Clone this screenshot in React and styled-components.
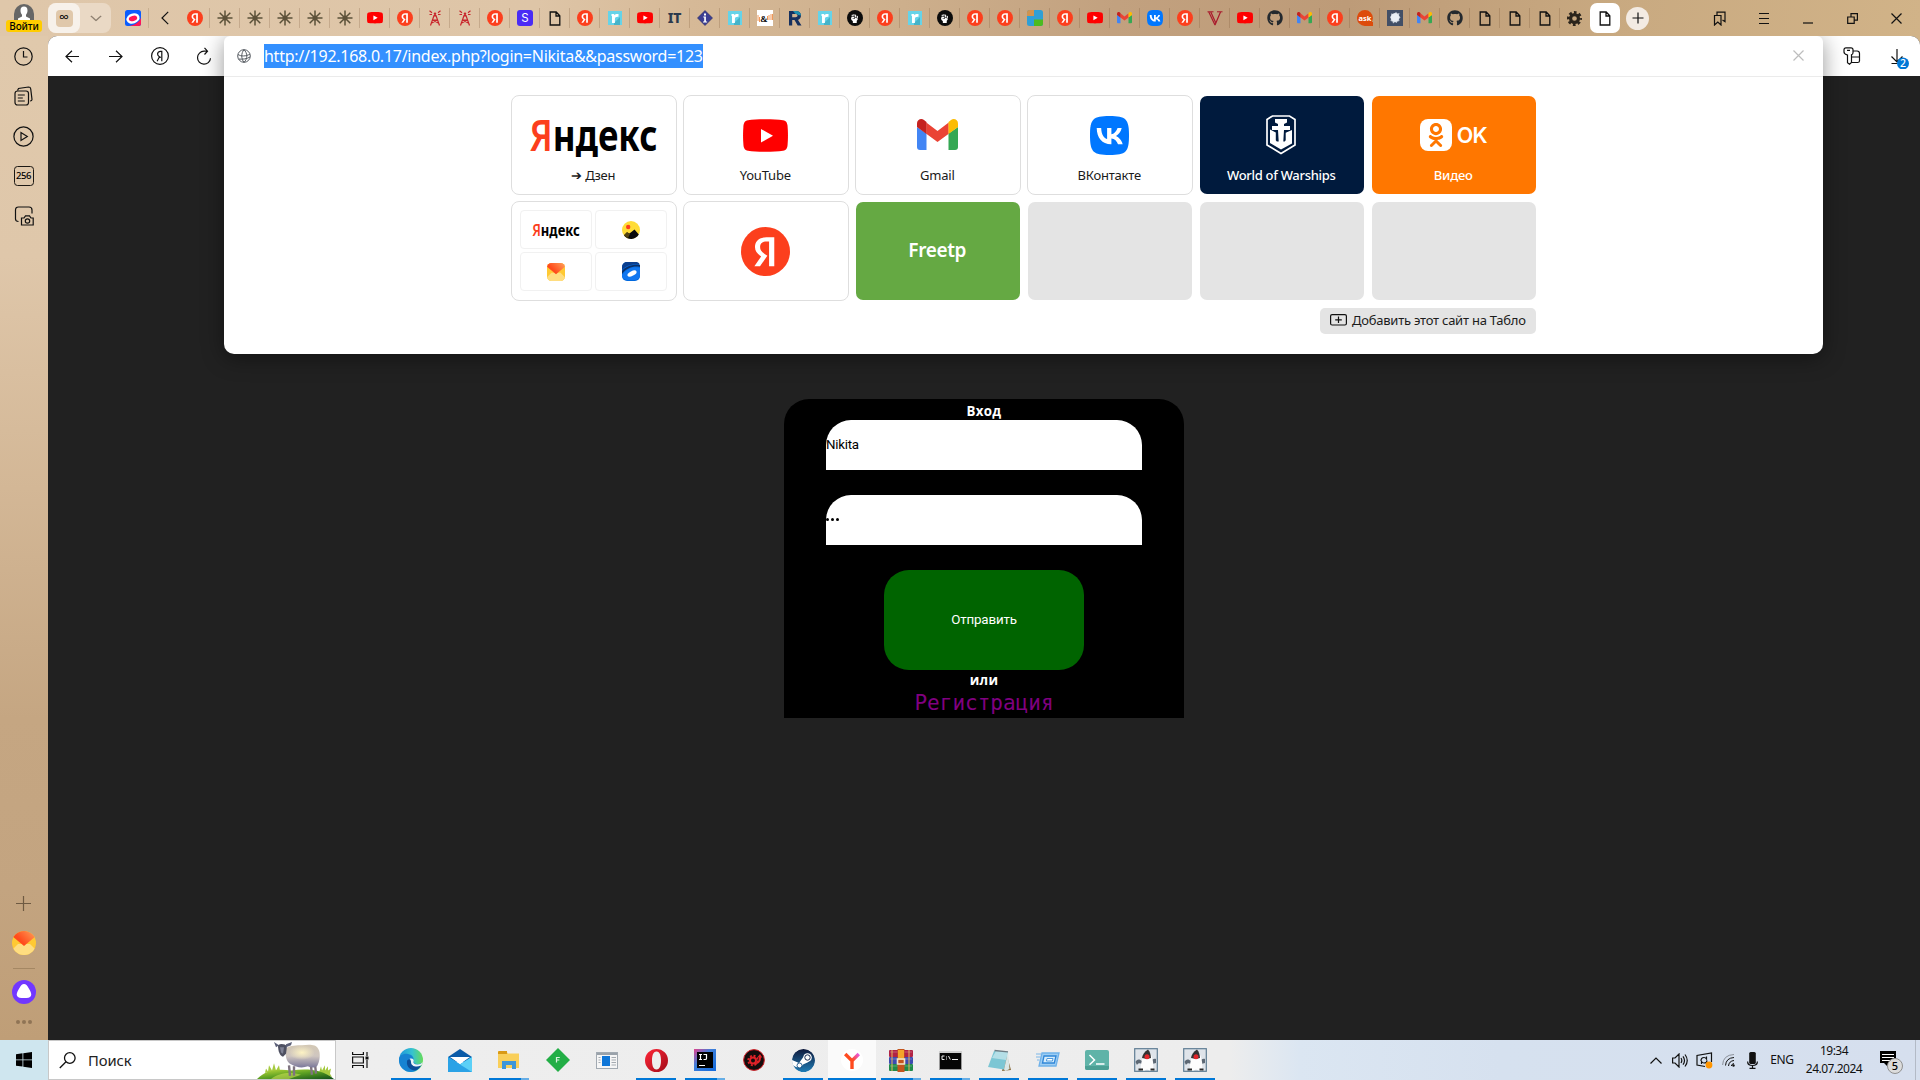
import React from "react";
import styled, { createGlobalStyle } from "styled-components";
import { FaGithub, FaOdnoklassniki, FaHandFist } from "react-icons/fa6";

const Global = createGlobalStyle`
  * { box-sizing: border-box; }
  html, body { margin: 0; padding: 0; overflow: hidden; }
  body { font-family: "Noto Sans", "Open Sans", sans-serif; color: #000; }
  svg { display: block; flex: none; }
`;

const UI = `"Noto Sans", "Open Sans", sans-serif`;

const Screen = styled.div`
  width: 1920px;
  height: 1080px;
  display: grid;
  grid-template-columns: 48px 1fr;
  grid-template-rows: 36px 1fr 40px;
  overflow: hidden;
  background: linear-gradient(90deg, #dfc7aa 0 200px, #d1b388 1700px);
`;

/* ---------- tab strip ---------- */
const TopBar = styled.header`
  grid-column: 1 / 3;
  display: flex;
  align-items: center;
  background: linear-gradient(97deg, #dfc7aa 0%, #dec5a7 28%, #d6b997 36%, #cdaf8c 47%, #c2a17f 58%, #bd9b78 70%, #c9aa81 85%, #d1b388 100%);
`;
const Account = styled.div`
  width: 48px;
  height: 36px;
  display: flex;
  flex-direction: column;
  align-items: center;
  padding-top: 4px;
`;
const SignIn = styled.div`
  width: 36px;
  height: 12px;
  flex: none;
  border-radius: 3px;
  background: #ffcc00;
  font: 500 10px/12px ${UI};
  letter-spacing: -0.1px;
  text-align: center;
`;
const TabGroup = styled.div`
  width: 63px;
  height: 30px;
  border-radius: 8px;
  display: flex;
  background: #ead9c5;
`;
const GroupCell = styled.div`
  width: ${p => p.$w}px;
  height: 30px;
  border-radius: 8px;
  display: flex;
  align-items: center;
  justify-content: center;
  background: ${p => (p.$on ? "#f7f1ea" : "transparent")};
`;
const GroupBadge = styled.div`
  width: 17px;
  height: 17px;
  border-radius: 4px;
  background: #e0c8ab;
  font: 500 14px/14px ${UI};
  text-align: center;
`;
const Pinned = styled.div`
  width: 38px;
  height: 20px;
  padding-left: 14px;
  display: flex;
  align-items: center;
  border-right: 1px solid #c9b091;
`;
const Back = styled.div`
  width: 31px;
  display: flex;
  justify-content: center;
`;
const Tab = styled.div`
  width: 30px;
  height: ${p => (p.$active ? 30 : 20)}px;
  flex: none;
  display: flex;
  align-items: center;
  justify-content: center;
  border-right: ${p => (p.$line ? "1px solid rgba(110,75,40,.22)" : "1px solid transparent")};
  ${p => p.$active && "background:#fff;border-radius:7px;border:0;"}
`;
const NewTab = styled.div`
  width: 23px;
  height: 23px;
  margin-left: 6px;
  border-radius: 50%;
  background: #f3ebe3;
  display: flex;
  align-items: center;
  justify-content: center;
`;
const WindowControls = styled.div`
  margin-left: auto;
  margin-right: 2px;
  display: flex;
  & > div { width: 44px; display: flex; justify-content: center; align-items: center; }
`;

/* ---------- side bar ---------- */
const Side = styled.aside`
  display: flex;
  flex-direction: column;
  align-items: center;
  background: linear-gradient(180deg, #e0c9ac 0%, #dfc7aa 22%, #d3b796 45%, #c5a682 68%, #c3a480 85%, #bf9e77 100%);
`;
const SideItem = styled.div`
  height: ${p => p.$h || 40}px;
  padding-bottom: ${p => p.$pb || 0}px;
  padding-right: 1px;
  display: flex;
  align-items: center;
  justify-content: center;
`;
const SideSpacer = styled.div` flex: 1; `;
const SideLine = styled.div` width: 22px; height: 1px; background: #a48763; `;
const Count = styled.div`
  width: 20px;
  height: 20px;
  border: 1.2px solid #1c1813;
  border-radius: 3.5px;
  font: 500 9.5px/18px ${UI};
  letter-spacing: -0.5px;
  text-align: center;
`;

/* ---------- browser body ---------- */
const Main = styled.main`
  position: relative;
  overflow: hidden;
  display: flex;
  flex-direction: column;
  border-radius: 9px 9px 0 0;
  background: #212121;
`;
const Toolbar = styled.div`
  height: 40px;
  flex: none;
  display: flex;
  align-items: center;
  background: #fff;
  padding: 0 2px;
  & > div { width: 44px; display: flex; justify-content: center; }
  & > div.grow { flex: 1; }
`;
const Page = styled.div`
  flex: 1;
  display: flex;
  justify-content: center;
  align-items: flex-start;
  padding-top: 323px;
`;

/* ---------- omnibox panel ---------- */
const Panel = styled.section`
  position: absolute;
  left: 176px;
  top: 0;
  width: 1599px;
  height: 318px;
  border-radius: 6px 6px 10px 10px;
  background: #fff;
  box-shadow: 0 4px 22px rgba(0,0,0,.42);
  display: flex;
  flex-direction: column;
`;
const Address = styled.div`
  height: 41px;
  flex: none;
  display: flex;
  align-items: center;
  padding: 0 19px 1px 13px;
  border-bottom: 1px solid #ebebeb;
`;
const Url = styled.div`
  width: 439px;
  height: 24px;
  margin-left: 13px;
  margin-right: auto;
  background: #3390ff;
  color: #fff;
  font: 400 16px/24px ${UI};
  letter-spacing: -0.265px;
  white-space: nowrap;
`;
const Board = styled.div`
  display: flex;
  flex-direction: column;
  padding: 18px 286px 0 287px;
`;
const Tiles = styled.div`
  display: grid;
  grid-template-columns: repeat(6, 166px);
  grid-auto-rows: 100px;
  gap: 6px;
`;
const Tile = styled.div`
  border: 1px solid ${p => (p.$bg ? "transparent" : "#dedede")};
  border-radius: 8px;
  padding-right: 1.5px;
  background: ${p => p.$bg || "#fff"};
  background-clip: padding-box;
  color: ${p => (p.$bg ? "#fff" : "#1a1a1a")};
  display: flex;
  flex-direction: column;
  align-items: center;
`;
const TileLogo = styled.div`
  height: 78px;
  flex: none;
  display: flex;
  align-items: center;
  justify-content: center;
`;
const TileLabel = styled.div`
  margin-top: -8px;
  font: ${p => (p.$bold ? 500 : 400)} 13px/18px ${UI};
  letter-spacing: ${p => p.$ls || "-0.2px"};
  white-space: nowrap;
`;
const OkWord = styled.span`
  margin-left: 5px;
  font: 600 21.5px/32px "Inter", sans-serif;
  letter-spacing: -0.9px;
`;
const Freetp = styled.div`
  margin: auto;
  padding-bottom: 3px;
  font: 600 19px/26px ${UI};
  letter-spacing: -0.35px;
`;
const MiniGrid = styled.div`
  display: grid;
  grid-template-columns: 72px 72px;
  grid-auto-rows: 39px;
  gap: 3px;
  margin-top: 8px;
`;
const Mini = styled.div`
  border: 1px solid #f1f1f1;
  border-radius: 4px;
  display: flex;
  align-items: center;
  justify-content: center;
`;
const Center = styled.div` margin: auto; `;
const AddSite = styled.div`
  align-self: flex-end;
  width: 216px;
  height: 26px;
  margin-top: 7px;
  margin-right: 1px;
  padding: 0 0 2px 10px;
  border-radius: 5px;
  background: #e4e4e4;
  color: #1c1c1c;
  display: flex;
  align-items: center;
  gap: 5px;
  font: 400 13px/24px ${UI};
  letter-spacing: -0.24px;
  white-space: nowrap;
`;

/* ---------- login form ---------- */
const Form = styled.form`
  width: 400px;
  height: 319px;
  border-radius: 25px 25px 0 0;
  background: #000;
  display: flex;
  flex-direction: column;
  align-items: center;
`;
const FormTitle = styled.div`
  height: ${p => p.$h}px;
  padding-top: ${p => p.$pt}px;
  color: #fff;
  font: 700 13.3px/18px "Open Sans", ${UI};
  letter-spacing: 0.3px;
`;
const Field = styled.div`
  width: 316px;
  height: 50px;
  margin-bottom: 25px;
  border-radius: 25px 25px 0 0;
  background: #fff;
  font: 400 13.33px/50px Roboto, "Liberation Sans", sans-serif;
  letter-spacing: -0.25px;
`;
const Dots = styled.div`
  display: flex;
  gap: 2px;
  padding-top: 23px;
  & > i { width: 3px; height: 3px; border-radius: 50%; background: #000; }
`;
const Submit = styled.div`
  width: 200px;
  height: 100px;
  border-radius: 25px;
  background: #006400;
  color: #fff;
  text-align: center;
  font: 400 13.33px/100px Roboto, "Liberation Sans", sans-serif;
  letter-spacing: -0.15px;
`;
const Register = styled.div`
  color: #800080;
  font: 400 21px/27px "DejaVu Sans Mono", monospace;
`;

/* ---------- task bar ---------- */
const TaskBar = styled.footer`
  grid-column: 1 / 3;
  display: flex;
  background: linear-gradient(90deg, #cfe6ef 0, #cfe6ef 48px, #eee 336px, #ededed 1230px, #dbe6f2 1300px, #d6e1ef 1500px, #d6dfee 1920px);
`;
const Start = styled.div`
  width: 48px;
  display: flex;
  align-items: center;
  justify-content: center;
`;
const Search = styled.div`
  width: 288px;
  border: 1px solid #c8c8c8;
  background: #fff;
  display: flex;
  align-items: center;
  padding-left: 10px;
  overflow: hidden;
`;
const SearchText = styled.div`
  flex: 1;
  margin-left: 12px;
  color: #222;
  font: 400 14.8px/20px ${UI};
  letter-spacing: -0.1px;
`;
const TaskButton = styled.div`
  width: ${p => (p.$active ? 48 : 40)}px;
  margin-right: ${p => (p.$active ? 5 : 9)}px;
  margin-left: ${p => (p.$active ? -4 : 0)}px;
  height: 40px;
  display: flex;
  flex-direction: column;
  align-items: center;
  background: ${p => (p.$active ? "#fafafa" : "transparent")};
`;
const TaskIcon = styled.div`
  height: 38px;
  padding-top: 2px;
  display: flex;
  align-items: center;
`;
const Under = styled.div`
  width: 100%;
  height: 2px;
  background: ${p =>
    p.$kind === "multi"
      ? "linear-gradient(90deg,#0078d7 0 32px,#66aee6 32px)"
      : p.$kind
      ? "#0078d7"
      : "transparent"};
`;
const Apps = styled.div` display: flex; padding-left: ${p => p.$pad}px; `;
const Tray = styled.div`
  margin-left: auto;
  display: flex;
  align-items: center;
  color: #111;
  font: 400 12px/18px ${UI};
`;
const TrayCell = styled.div`
  width: ${p => p.$w}px;
  display: flex;
  justify-content: center;
  letter-spacing: -0.3px;
  white-space: nowrap;
`;
const Clock = styled.div`
  width: 66px;
  text-align: center;
  letter-spacing: -0.5px;
`;
const Notice = styled.div`
  width: 48px;
  padding: 1px 2px 0 0;
  display: flex;
  justify-content: center;
`;
const Peek = styled.div`
  width: 5px;
  height: 40px;
  border-left: 1px solid #b3bac6;
`;

/* ---------- drawings ---------- */
const line = { fill: "none", stroke: "#111", strokeWidth: 1.2 };

const Ya = ({ s = 16 }) => (
  <svg width={s} height={s} viewBox="0 0 48 48">
    <circle cx="24" cy="24" r="24" fill="#fc3f1d" />
    <path d="M27.5 38.500V14.200h-2.600c-4 0-6.200 2-6.200 5.200 0 3.400 1.500 5 4.500 7l2.600 1.700-7.200 10.400h-5.500l6.600-9.700c-3.800-2.700-6-5.300-6-9.200 0-5.600 3.900-9.500 11.200-9.500h7.700v28.400z" fill="#fff" />
  </svg>
);
const Star = () => (
  <svg width="16" height="16" viewBox="0 0 16 16" stroke="#5b5139" strokeWidth="1.500">
    <path d="M8 .5v15M.5 8h15M2.700 2.700l10.600 10.600M13.300 2.700L2.700 13.300" />
    <circle cx="8" cy="8" r="2.500" fill="#5d5139" stroke="none" />
  </svg>
);
const Tube = ({ w = 16, h = 11.500 }) => (
  <svg width={w} height={h} viewBox="0 0 45 33" preserveAspectRatio="none">
    <path d="M5 1.200C14 -.2 31 -.2 40 1.200 43.500 1.800 44.300 4 44.600 7.500c.5 6 .5 12 0 18-.3 3.500-1.100 5.700-4.600 6.300-9 1.400-26 1.400-35 0C1.500 31.200.7 29 .4 25.500c-.5-6-.5-12 0-18C.7 4 1.500 1.800 5 1.200z" fill="#f00" />
    <path d="M18 10v13.500l12-6.700z" fill="#fff" />
  </svg>
);
const Tower = () => (
  <svg width="12" height="16" viewBox="0 0 12 16" fill="none" stroke="#c8242b" strokeWidth="1.200">
    <path d="M1.500 15.500L5 5.500h2l3.500 10M3.500 10h5M2.200 13.300L8.500 10M9.800 13.300L3.500 10M6 3.500v3" />
    <path d="M.5.8l2.500 2M11.500.8l-2.500 2M.5 4.500H3M11.500 4.500H9" strokeWidth="1.100" />
    <circle cx="6" cy="3.600" r="1.200" fill="#c8242b" stroke="none" />
  </svg>
);
const Glyph = ({ bg, fg = "#fff", t, r = 3, size = 12, w = 400, f = "Inter", s = 16 }) => (
  <svg width={s} height={s} viewBox="0 0 16 16">
    <rect width="16" height="16" rx={r} fill={bg} />
    <text x="8" y={8 + size * 0.36} textAnchor="middle" fill={fg} fontFamily={f} fontWeight={w} fontSize={size}>{t}</text>
  </svg>
);
const Doc = () => (
  <svg width="12" height="15" viewBox="0 0 12 15" {...line} strokeWidth="1.300">
    <path d="M1.200 1h6l3.600 3.800V14H1.200zM7 1v4h3.800" />
  </svg>
);
const Rr = () => (
  <svg width="14" height="14" viewBox="0 0 14 14">
    <rect width="14" height="14" fill="#66d3e8" />
    <path d="M6 12l6-6v8H6z" fill="#45b3c9" />
    <path d="M3.500 3h2.700v1.200C7 3.200 8.500 2.800 10.500 3v2.800c-2.200-.2-3.600.4-3.600 2.200v4H4V5H3.500z" fill="#fff" />
  </svg>
);
const Info = () => (
  <svg width="16" height="16" viewBox="0 0 16 16">
    <path d="M8 .5L15.500 8 8 15.500.5 8z" fill="#3c3e93" stroke="#24265e" strokeWidth=".6" />
    <path d="M6.300 6.500h2.600v5h1.200v1H6v-1h1.200v-4h-.9zM7 3.500h2v2H7z" fill="#fff" />
  </svg>
);
const FistMark = styled.div`
  width: 16px;
  height: 16px;
  border-radius: 50%;
  background: #0c0c0c;
  color: #fff;
  display: flex;
  align-items: center;
  justify-content: center;
`;
const Fist = () => <FistMark><FaHandFist size={9} /></FistMark>;
const Squares = () => (
  <svg width="16" height="16" viewBox="0 0 16 16">
    <rect width="16" height="16" rx="2.500" fill="#2f9fd6" />
    <path d="M0 2.500A2.500 2.500 0 0 1 2.500 0H7v6H0z" fill="#cf9350" />
    <path d="M7 9.500h9v4a2.500 2.500 0 0 1-2.500 2.500H7z" fill="#4cbb1f" />
  </svg>
);
const Gmail = ({ w = 15 }) => (
  <svg width={w} height={w * 0.76} viewBox="0 0 41 31">
    <path d="M0 8v20a3 3 0 0 0 3 3h6.500V14.500z" fill="#4285f4" />
    <path d="M41 8v20a3 3 0 0 1-3 3h-6.500V14.500z" fill="#34a853" />
    <path d="M9.300 3.500L20.500 12 31.700 3.500V14.700L20.500 23 9.300 14.700z" fill="#ea4335" />
    <path d="M0 8V4.300C0 .6 4.200-1.300 7 .9l2.500 2V14.800L0 8z" fill="#c5221f" />
    <path d="M41 8V4.300c0-3.700-4.200-5.600-7-3.400l-2.500 2v11.900L41 8z" fill="#fbbc04" />
  </svg>
);
const Vk = ({ s = 16 }) => (
  <svg width={s} height={s} viewBox="0 0 39 39">
    <path d="M0 19C0 3 3 0 19.500 0S39 3 39 19.500 36 39 19.500 39 0 36 0 19z" fill="#07f" />
    <path d="M21 28.200C12 28.200 6.900 22 6.700 12h4.500c.1 7.300 3.400 10.400 5.900 11.100V12h4.300v6.300c2.500-.3 5.200-3.100 6.100-6.300h4.200c-.7 4-3.600 6.800-5.700 8 2.100 1 5.400 3.500 6.700 8.200h-4.700c-1-3.100-3.400-5.500-6.600-5.800v5.800z" fill="#fff" />
  </svg>
);
const Vee = () => (
  <svg width="16" height="16" viewBox="0 0 16 16" fill="none" stroke="#a9192b">
    <path d="M1.800 2L8 15M3.800 2L8.800 13M8 15l5.500-13" strokeWidth="1.200" />
    <path d="M.5 1.800h6M10 1.800h5.500" strokeWidth="1" />
  </svg>
);
const Ask = () => (
  <svg width="16" height="16" viewBox="0 0 16 16">
    <path d="M8 0a8 8 0 1 1-.1 16A8 8 0 0 1 8 0zM9 12h7v4H9z" fill="#dd4b0b" />
    <text x="8" y="10.600" textAnchor="middle" fill="#fff" fontFamily="Noto Sans" fontWeight="700" fontSize="7.500">ask</text>
  </svg>
);
const Splash = () => (
  <svg width="16" height="16" viewBox="0 0 16 16">
    <rect width="16" height="16" fill="#424f66" />
    <circle cx="8" cy="7.500" r="4.200" fill="#e9eef4" />
    <path d="M8 3l1-1 1.500 1.500 2-.5-.5 2.500 1.500 2L12 9l.5 2-2 .5-1 1.500L8 12l-2 1.500-.5-2-2-.5.500-2L3 7l1.500-1.500-.5-2 2.500.5z" fill="#e9eef4" opacity=".8" />
  </svg>
);
const Gear = () => (
  <svg width="15" height="15" viewBox="0 0 16 16">
    <circle cx="8" cy="8" r="4.200" fill="none" stroke="#2b241b" strokeWidth="3.400" />
    <circle cx="8" cy="8" r="6.500" fill="none" stroke="#2b241b" strokeWidth="3" strokeDasharray="2.800 2.305" strokeDashoffset="1.400" />
  </svg>
);
const TB = () => (
  <svg width="16" height="16" viewBox="0 0 16 16">
    <rect width="16" height="16" fill="#fff" />
    <path d="M1 5v6M2.500 7v5M12 5v5M14 4v6M15.500 4v6M10.500 6v4" stroke="#f0995b" strokeWidth="1" />
    <text x="7" y="11.500" textAnchor="middle" fontFamily="Liberation Serif" fontWeight="700" fontSize="9">&amp;</text>
  </svg>
);
const Rl = () => (
  <svg width="14" height="16" viewBox="0 0 14 16">
    <path d="M1 1h7c3 0 5 1.700 5 4.600 0 2.200-1.200 3.700-3 4.300l3.500 5.600H9.700L6.500 10H4.200v5.500H1zM4.200 4v3.300h3.300c1.300 0 2-.6 2-1.700S8.800 4 7.500 4z" fill="#16305e" />
    <path d="M5 1h3c3 0 5 1.700 5 4.600l-3-.5C9.500 4.300 8.800 4 7.500 4z" fill="#1d8fb0" />
  </svg>
);
const Oval = () => (
  <svg width="16" height="16" viewBox="0 0 16 16">
    <rect width="16" height="16" rx="2.500" fill="#0a5cff" />
    <path d="M4 16c3 0 12-4 12-9v6.500a2.500 2.500 0 0 1-2.500 2.500z" fill="#ff1556" />
    <ellipse cx="8" cy="8.500" rx="5.500" ry="3.800" transform="rotate(-18 8 8.500)" fill="#ff1556" stroke="#fff" strokeWidth="2.400" />
  </svg>
);

const Words = ({ w, h }) => (
  <svg width={w} height={h} viewBox="-1 -18 129 68" overflow="visible">
    <text x="-.5" y="31.500" fontFamily="Noto Sans, sans-serif" fontWeight="700" fontSize="43" textLength="128" lengthAdjust="spacingAndGlyphs"><tspan fill="#fc3f1d" fontWeight="600">Я</tspan>ндекс</text>
  </svg>
);
const Letter = ({ s, r = 6 }) => (
  <svg width={s} height={s} viewBox="0 0 24 24">
    <defs>
      <linearGradient id="flap" x1="0" y1=".6" x2="1" y2="0">
        <stop offset=".25" stopColor="#ff4b1c" /><stop offset="1" stopColor="#ffa35c" />
      </linearGradient>
      <clipPath id={"env" + r}><rect width="24" height="24" rx={r} /></clipPath>
    </defs>
    <g clipPath={`url(#env${r})`}>
      <rect width="24" height="24" fill="#ffc933" />
      <path d="M12 13l6 0 6 6v5H0v-5l6-6z" fill="#ffdd80" />
      <path d="M0 5V0h24v5L12 15z" fill="url(#flap)" />
    </g>
  </svg>
);
const Photo = () => (
  <svg width="18" height="18" viewBox="0 0 18 18">
    <circle cx="9" cy="9" r="9" fill="#ffdc37" />
    <circle cx="6.200" cy="6" r="2.200" fill="#fc3f1d" />
    <path d="M2 14.500l3-3 2.500 1 5-4 4.300 5A9 9 0 0 1 2 14.500z" fill="#0a0a0a" />
    <path d="M2 14l3-3 3 2-2 4a9 9 0 0 1-4-3z" fill="#54430f" />
  </svg>
);
const Saucer = () => (
  <svg width="18" height="19" viewBox="0 0 18 19">
    <rect width="18" height="19" rx="5" fill="#0068de" />
    <path d="M0 8C3 4 10 1.500 18 2.500A5 5 0 0 0 13 0H5a5 5 0 0 0-5 5z" fill="#0b3f8e" />
    <path d="M0 12C4 6 12 3.500 18 5V3C10 2 3 5 0 9z" fill="#0b2f66" />
    <path d="M0 13C5 6 12 4 18 6v7a5 5 0 0 1-5 5H5a5 5 0 0 1-5-5z" fill="#1177f0" />
    <ellipse cx="10" cy="11.500" rx="5" ry="2.400" transform="rotate(-28 10 11.500)" fill="#fff" />
  </svg>
);
const Ship = () => (
  <svg width="30" height="40" viewBox="0 0 30 40">
    <path d="M6.500 1h17L29 4.500V30L15 38.500 1 30V4.500z" fill="none" stroke="#fff" strokeWidth="1.700" />
    <path d="M9 4h12v3.500l-3 1.500v2h6v4h-6l-.7 11.500h1.400l1-1.200v-7.600l6.300-2.700v13.500L15 34.500 4 28V14.500L9.800 17.500v7.800l1 1.200h1.900L12 15H6v-4h6V9L9 7.500z" fill="#fff" />
  </svg>
);
const OkMark = styled.div`
  width: 32px;
  height: 32px;
  border-radius: 8px;
  background: #fff;
  color: #ff7700;
  display: flex;
  align-items: center;
  justify-content: center;
`;
const Globe = () => (
  <svg width="14" height="14" viewBox="0 0 14 14" fill="none" stroke="#555a60" strokeWidth="1">
    <circle cx="7" cy="7" r="6.300" />
    <path d="M1 5.500C4 7.500 9 7.500 13 5M1.500 10C5 10.500 10 10 13 8M7 .7C4 4 4 10 7 13.300M7 .7c3.500 3.300 4 9 0 12.600" />
  </svg>
);
const Edge = () => (
  <svg width="24" height="24" viewBox="0 0 24 24">
    <defs>
      <linearGradient id="e1" x1="0" y1=".5" x2="1" y2=".5"><stop stopColor="#1e96dc" /><stop offset=".55" stopColor="#36c2d0" /><stop offset="1" stopColor="#66dc5a" /></linearGradient>
    </defs>
    <circle cx="12" cy="12" r="12" fill="url(#e1)" />
    <path d="M0 12C0 7 5 5 9 6c5 1 6 4 5.500 7 0 2 2 3.500 5 3.200L23 15c-2 5-6 9-11 9A12 12 0 0 1 0 12z" fill="#1783d2" />
    <path d="M8 13c-1 6 4 9.500 8 9.500 3-.5 5-3 6.500-5.500-6 3-11 0-10.500-4.500-1-1.500-3.500-1-4 .5z" fill="#0d4e98" />
    <path d="M12 14c0-2-1-3-1.500-3.200 3-1 5 1 4 2.700-.7 1.500 1 3 4 2.900 2.500 0 4.500-1.500 5.300-2.500-.5 2-1 3-1.800 3.600-5 2.500-10 .5-10-3.500z" fill="#eef4f6" />
  </svg>
);
const MailApp = () => (
  <svg width="24" height="23" viewBox="0 0 24 23">
    <path d="M0 8l12-8 12 8v5H0z" fill="#0a5ba8" />
    <path d="M0 8l12 7 12-7v15H0z" fill="#35b2ee" />
    <path d="M0 23L24 8v15z" fill="#5bd0f7" /><path d="M0 8l24 15H0z" fill="#2aa2e6" />
    <path d="M2 8h20l-10 7z" fill="#fff" />
  </svg>
);
const Folder = () => (
  <svg width="22" height="19" viewBox="0 0 22 19">
    <path d="M0 0h8l2 2.500h11V17H0z" fill="#f9cf5a" />
    <path d="M1 0h8v3H0V1z" fill="#d99a16" />
    <path d="M4 10h14v8h-4v-4H8v4H4z" fill="#3d96d9" />
  </svg>
);
const Diamond = () => (
  <svg width="24" height="24" viewBox="0 0 24 24">
    <path d="M12 0l12 12-12 12L0 12z" fill="#22ae46" />
    <path d="M10.500 14.500v-5h3.300M10.500 12h2.800" fill="none" stroke="#d9f3df" strokeWidth="1.200" />
  </svg>
);
const News = () => (
  <svg width="22" height="17" viewBox="0 0 22 17">
    <rect x=".5" y=".5" width="21" height="16" fill="#f6f6f6" stroke="#a2aab2" />
    <path d="M1 2h20" stroke="#9aa2aa" strokeWidth="2" />
    <rect x="6" y="4" width="8" height="10" fill="#0f76d8" />
    <path d="M2.500 5.500h2M2.500 8h2M2.500 10.500h2M15.500 5.500H20M15.500 8H20M15.500 10.500H20M15.500 13H20" stroke="#a5abb1" />
  </svg>
);
const Opera = () => (
  <svg width="23" height="23" viewBox="0 0 23 23">
    <defs><linearGradient id="op" x1="0" y1="0" x2="1" y2="1"><stop stopColor="#ff2638" /><stop offset="1" stopColor="#a00b17" /></linearGradient></defs>
    <path fillRule="evenodd" d="M11.500 0a11.500 11.500 0 1 1 0 23 11.500 11.500 0 0 1 0-23zm0 2.500C8 2.500 7 7 7 11.500s1 9 4.500 9 4.500-4.500 4.500-9-1-9-4.500-9z" fill="url(#op)" />
  </svg>
);
const Idea = () => (
  <svg width="22" height="22" viewBox="0 0 22 22">
    <defs><linearGradient id="ij" x1="0" y1="0" x2="1" y2="1"><stop stopColor="#e2418c" /><stop offset=".4" stopColor="#3f7fd9" /><stop offset="1" stopColor="#146bdc" /></linearGradient></defs>
    <rect width="22" height="22" fill="url(#ij)" />
    <rect x="3" y="3" width="16" height="16" fill="#000" />
    <path d="M5 16.500h6M5 5.500h3M6.500 5.500v5M5 10.500h3M9.500 5.500h3v4q0 1-1.200 1H9.500" stroke="#fff" strokeWidth="1.200" fill="none" />
  </svg>
);
const RedGear = () => (
  <svg width="22" height="22" viewBox="0 0 22 22">
    <circle cx="11" cy="11" r="10.400" fill="#140d0d" stroke="#d41f26" strokeWidth="1" />
    <circle cx="10" cy="11.500" r="3" fill="none" stroke="#e02228" strokeWidth="2" />
    <circle cx="10" cy="11.500" r="4.800" fill="none" stroke="#e02228" strokeWidth="1.800" strokeDasharray="2 1.770" />
    <path d="M11 13.500c4 0 5-2 5-5h-1.800L17 5l2.300 3.500H18c0 5-3 7-7 6.500z" fill="#e02228" />
  </svg>
);
const Steam = () => (
  <svg width="23" height="23" viewBox="0 0 23 23">
    <defs>
      <linearGradient id="st" x1="0" y1="0" x2="0" y2="1"><stop stopColor="#101a3c" /><stop offset="1" stopColor="#1f7cb5" /></linearGradient>
      <clipPath id="stc"><circle cx="11.500" cy="11.500" r="11.500" /></clipPath>
    </defs>
    <g clipPath="url(#stc)">
      <circle cx="11.500" cy="11.500" r="11.500" fill="url(#st)" />
      <path d="M0 11l7 3 4-5.500 4-3 4 5-3.500 3-4.500 2-2.500 3.500L4 18l-4-2z" fill="#fff" />
      <circle cx="15.500" cy="8.500" r="4.300" fill="#fff" />
      <circle cx="15.500" cy="8.500" r="2.700" fill="none" stroke="#16294f" strokeWidth="1" />
      <circle cx="7.500" cy="16.500" r="2.500" fill="none" stroke="#1b5487" strokeWidth=".9" />
    </g>
  </svg>
);
const YBrowser = () => (
  <svg width="22" height="22" viewBox="0 0 22 22">
    <defs><linearGradient id="yb" gradientUnits="userSpaceOnUse" x1="9" y1="14" x2="18" y2="5"><stop offset=".3" stopColor="#ff4b1f" /><stop offset="1" stopColor="#e85bea" /></linearGradient></defs>
    <circle cx="11" cy="11" r="11" fill="#fff" />
    <path d="M4.200 5L11 11.800V20M11 11.800L17.800 5" fill="none" stroke="url(#yb)" strokeWidth="3.400" />
  </svg>
);
const Rar = () => (
  <svg width="24" height="23" viewBox="0 0 24 23">
    <rect y="1" width="24" height="7" rx="1" fill="#b12345" /><rect y="8" width="24" height="7" rx="1" fill="#3c4bb0" /><rect y="15" width="24" height="7" rx="1" fill="#1f8a4a" />
    <path d="M1 3h22M1 10h22M1 17h22" stroke="#fff" strokeOpacity=".25" />
    <path d="M3 1v21M20 1v21" stroke="#e3b95a" strokeWidth="1" />
    <path d="M8.500 0h7v23h-7z" fill="#c4551d" /><path d="M9 1h6v10H9z" fill="#f3a52a" />
    <path d="M8.500 10h7v5h-7z" fill="none" stroke="#f0e6cc" strokeWidth="1.600" />
  </svg>
);
const Cmd = () => (
  <svg width="23" height="19" viewBox="0 0 23 19">
    <rect width="23" height="19" fill="#9b9b9b" /><path d="M0 0h23v2H0z" fill="#d0d0d0" /><rect x="1" y="2" width="21" height="16" fill="#060606" />
    <path d="M5.500 5H3v3.500h2.500M7.500 5.500v1M7.500 7.500v1M9.500 5l1.800 3.500M13 8.500h6" stroke="#eee" fill="none" />
  </svg>
);
const Note = () => (
  <svg width="23" height="23" viewBox="0 0 23 23">
    <path d="M18 3l5 18-9 1z" fill="#8a6c3c" />
    <path d="M6 2l14 1-4 17.500L0 18z" fill="#7cc6d4" /><path d="M8 2l12 1-2 8L4 9z" fill="#b4dfe7" />
    <path d="M16 20.500L20 3l1.500 17-4 2z" fill="#d9e6e6" />
    <path d="M6.500 1.500l13.500 1.300" stroke="#6d7c84" strokeWidth="1.300" />
  </svg>
);
const RunBox = () => (
  <svg width="24" height="18" viewBox="0 0 24 18" fill="none">
    <path d="M6 2h17l-3 13H3z" fill="#9dcdf3" stroke="#6fb2ea" strokeWidth="1.300" />
    <path d="M8 5h12l-1.700 7H6.500z" fill="#d6ecfb" stroke="#2f86d8" strokeWidth="1.300" />
    <path d="M11 7.500h6l-.6 2.500h-6z" fill="#fff" stroke="#4d9be0" />
    <path d="M0 3h5M0 6h4.500M1 9h2.500" stroke="#7db7e8" />
  </svg>
);
const Term = () => (
  <svg width="24" height="20" viewBox="0 0 24 20">
    <rect width="24" height="20" rx="2" fill="#5fb3a8" />
    <path d="M0 16h24v2a2 2 0 0 1-2 2H2a2 2 0 0 1-2-2z" fill="#4b9f94" />
    <path d="M4.500 5l5 5-5 4.800M11 14h8.500" stroke="#fff" strokeWidth="1.500" fill="none" />
  </svg>
);
const Duke = () => (
  <svg width="24" height="24" viewBox="0 0 24 24">
    <rect x=".7" y=".7" width="22.600" height="22.600" fill="#dfe4ea" stroke="#5f7d93" strokeWidth="1.200" />
    <path d="M1.500 14c1-3 4-3.500 6.500-1v3c-2-1-4-1-5 1zM16 12c2 1 3-2 6-1v4l-4 1z" fill="#5d6874" />
    <path d="M14 2c-3 2-5.500 7-6.500 12-1 4-1 6 0 8.500h3l2.500-1 3 1h3c1-6 0-15-5-20.500z" fill="#fdfdfd" />
    <path d="M14 1.500c-3.500 2-5.500 5-6 8.500l5 1 4-1c-.2-3.500-1-6.500-3-8.500z" fill="#333" />
    <circle cx="13" cy="8.800" r="2.500" fill="#e3262b" />
    <path d="M4.500 21.500h4.500M16.500 21.500h4" stroke="#2c2c2c" strokeWidth="1.800" fill="none" />
  </svg>
);
const Sheep = () => (
  <svg width="78" height="38" viewBox="0 0 78 36" preserveAspectRatio="none">
    <defs>
      <linearGradient id="wool" x1="0" y1="0" x2="0" y2="1"><stop stopColor="#d3c8b4" /><stop offset=".5" stopColor="#cfc6c0" /><stop offset="1" stopColor="#7b789a" /></linearGradient>
      <radialGradient id="shine"><stop stopColor="#fdf3c4" /><stop offset="1" stopColor="#fdf3c4" stopOpacity="0" /></radialGradient>
      <linearGradient id="hill" x1="0" y1="0" x2="1" y2="1"><stop stopColor="#c4dd3c" /><stop offset=".5" stopColor="#5a9f22" /><stop offset="1" stopColor="#0f4d1a" /></linearGradient>
    </defs>
    <path d="M8 30l1-4 2 3 1-6 3 5 2-7 2 7 3-5 1 5zM62 30l2-6 1 4 3-5v5l3-4v4l3-2-1 5 2 3z" fill="#a5ca3f" />
    <path d="M0 36c9-9 22-10 34-8 14-2 30-2 43 8z" fill="url(#hill)" />
    <path d="M14 36c8-6 20-7 30-4l-12 4z" fill="#d3e45a" opacity=".55" />
    <path d="M32 23l1 10M37 24v9M54 24l1 8M58 22l1 9" stroke="#7f7480" strokeWidth="2.400" />
    <path d="M29 7c4-3 11-3 16-3 7-1 14-1 16 3 3 4 2 12-1 17-4 2-7 1-9 0-6 2-12 1-17-2-5-2-6-9-5-15z" fill="url(#wool)" />
    <ellipse cx="45" cy="11" rx="13" ry="7" fill="url(#shine)" />
    <path d="M21 4c3-2 7-1 9 1l-1 7-3 3c-3-1-5-5-5-11z" fill="#4e5061" />
    <path d="M17 1l5 3-3 2zM29 3l6-2-1 3-5 2z" fill="#5c6078" />
    <path d="M23 6h4l-1 6-2-1z" fill="#7f8295" />
  </svg>
);

const ItWord = styled.span`
  font: 800 14px/20px ${UI};
  letter-spacing: -0.3px;
  color: #2b3a4d;
`;
const Hub = () => <FaGithub size={16} color="#24292e" />;
const Ess = () => <Glyph bg="#4a2bf5" t="S" size={11.5} />;
const It = () => <ItWord>IT</ItWord>;

const tabs = [
  Ya, Star, Star, Star, Star, Star, Tube, Ya, Tower, Tower, Ya, Ess, Doc, Ya, Rr, Tube, It,
  Info, Rr, TB, Rl, Rr, Fist, Ya, Rr, Fist, Ya, Ya, Squares, Ya, Tube, Gmail, Vk, Ya, Vee, Tube,
  Hub, Gmail, Ya, Ask, Splash, Gmail, Hub, Doc, Doc, Doc, Gear, Doc,
];

const apps = [
  [Edge, "one"], [MailApp, ""], [Folder, "multi"], [Diamond, ""], [News, ""], [Opera, "one"], [Idea, "multi"],
  [RedGear, ""], [Steam, "one"], [YBrowser, "one", true], [Rar, "multi"], [Cmd, "multi"], [Note, "one"],
  [RunBox, "one"], [Term, "one"], [Duke, "one"], [Duke, "one"],
];

function Tabs() {
  return (
    <TopBar>
      <Account>
        <svg width="20" height="16" viewBox="0 0 20 16">
          <path d="M0 10a10 10 0 0 1 20 0v6H0z" fill="#666" />
          <path d="M10 2.500c2.300 0 3.500 1.500 3.500 4 0 2-.8 3.500-1.500 4.200v1.800l4 2V16H4v-1.500l4-2v-1.800C7.300 10 6.500 8.500 6.500 6.500c0-2.500 1.200-4 3.500-4z" fill="#fff" />
        </svg>
        <SignIn>Войти</SignIn>
      </Account>
      <TabGroup>
        <GroupCell $w={32} $on><GroupBadge>∞</GroupBadge></GroupCell>
        <GroupCell $w={31}>
          <svg width="12" height="7" viewBox="0 0 12 7" fill="none" stroke="#8e8071" strokeWidth="1.300"><path d="M.8 1c2 1.500 3.500 3 5.200 4.500C7.700 4 9.200 2.500 11.200 1" /></svg>
        </GroupCell>
      </TabGroup>
      <Pinned><Oval /></Pinned>
      <Back><svg width="8" height="14" viewBox="0 0 8 14" {...line}><path d="M7.200.8L1 7l6.200 6.200" /></svg></Back>
      {tabs.map((Icon, i) => (
        <Tab key={i} $line={i < 46} $active={i === 47}><Icon /></Tab>
      ))}
      <NewTab><svg width="12" height="12" viewBox="0 0 12 12" {...line}><path d="M6 .5v11M.5 6h11" /></svg></NewTab>
      <WindowControls>
        <div><svg width="14" height="15" viewBox="0 0 14 15" {...line}><path d="M1.500 4.500h6.500V14L4.800 11 1.500 14zM4 4V1.200h8v9.500L9.500 9" /></svg></div>
        <div><svg width="10" height="11" viewBox="0 0 10 11" {...line}><path d="M0 .5h10M0 5.500h10M0 10.500h10" strokeWidth="1" /></svg></div>
        <div><svg width="10" height="11" viewBox="0 0 10 11" {...line}><path d="M0 10h10" /></svg></div>
        <div><svg width="11" height="11" viewBox="0 0 11 11" {...line}><path d="M.7 4h6.500v6.400H.7zM4 4V.7h6.400v6.500H7" /></svg></div>
        <div><svg width="11" height="11" viewBox="0 0 11 11" {...line}><path d="M.5.5l10 10M10.500.5l-10 10" /></svg></div>
      </WindowControls>
    </TopBar>
  );
}

function SideBar() {
  return (
    <Side>
      <SideItem><svg width="19" height="19" viewBox="0 0 19 19" {...line}><circle cx="9.500" cy="9.500" r="8.700" /><path d="M9.500 4v6h4" /></svg></SideItem>
      <SideItem><svg width="19" height="20" viewBox="0 0 19 20" {...line}><rect x="1" y="5" width="13.500" height="14" rx="2.500" /><path d="M3.500 4.500l1-2 10-1.500q2 0 2.200 1.700L18 13.500q0 1.500-2 1.500M3.800 9h7M3.800 12h5M3.800 15h7" /></svg></SideItem>
      <SideItem><svg width="21" height="21" viewBox="0 0 21 21" {...line}><circle cx="10.500" cy="10.500" r="9.600" /><path d="M8 6.500v8l6.300-4z" /></svg></SideItem>
      <SideItem><Count>256</Count></SideItem>
      <SideItem><svg width="20" height="20" viewBox="0 0 20 20" {...line}><path d="M4.500 15.500Q1.500 15.500 1.500 13V4Q1.500 1 4.500 1H15q3 0 3 3v3.500M8 12h2l1.500-2.200h4L17 12h2.200v7H7.500v-7z" /><circle cx="13.500" cy="15" r="2.200" /></svg></SideItem>
      <SideSpacer />
      <SideItem $h={40}><svg width="15" height="15" viewBox="0 0 15 15" {...line} stroke="#6e5a42"><path d="M7.500 0v15M0 7.500h15" /></svg></SideItem>
      <SideItem $h={45} $pb={5}><Letter s={24} r={12} /></SideItem>
      <SideLine />
      <SideItem $h={46}>
        <svg width="24" height="24" viewBox="0 0 24 24"><circle cx="12" cy="12" r="12" fill="#7137ff" /><path d="M12 4c2 0 3 1.200 5 4.700 2 3.500 2.700 5.500 2 7-.8 2-3.500 2.300-7 2.300s-6.200-.3-7-2.300c-.7-1.500 0-3.500 2-7C9 5.200 10 4 12 4z" fill="#fff" /></svg>
      </SideItem>
      <SideItem $h={25} $pb={11}><svg width="16" height="4" viewBox="0 0 16 4" fill="#8f7455"><circle cx="2" cy="2" r="2" /><circle cx="8" cy="2" r="2" /><circle cx="14" cy="2" r="2" /></svg></SideItem>
    </Side>
  );
}

export default function App() {
  return (
    <Screen>
      <Global />
      <Tabs />
      <SideBar />
      <Main>
        <Toolbar>
          <div><svg width="14" height="13" viewBox="0 0 14 13" {...line}><path d="M14 6.500H1M7 .7L1 6.500l6 5.800" /></svg></div>
          <div><svg width="14" height="13" viewBox="0 0 14 13" {...line}><path d="M0 6.500h13M7 .7l6 5.800-6 5.800" /></svg></div>
          <div><svg width="18" height="18" viewBox="0 0 18 18" {...line}><circle cx="9" cy="9" r="8.400" /><path d="M10.800 14.200V4.300H9.600c-2 0-3 1.200-3 2.700 0 1.300.7 2 1.800 2.700l1.400.9M8.500 9.800l-2.400 4.400" /></svg></div>
          <div><svg width="16" height="18" viewBox="0 0 16 18" {...line}><path d="M11 4.200H8a6.500 6.500 0 1 0 6.500 7M8.500.8l3 3.400-3 3.300" /></svg></div>
          <div className="grow" />
          <div><svg width="18" height="18" viewBox="0 0 18 18" {...line}><path d="M3 .8h5q2 0 2 2v3q0 1.500-1.500 2v7.700L6.500 17.200l-2-1.500V8Q1 7 1 5V2.800q0-2 2-2zM4 3.300h3M10 4h4q2.500 0 2.500 2.500V14q0 1.500-2 1.500H8.500M9 10H16.500" /></svg></div>
          <div><svg width="26" height="26" viewBox="0 0 26 26" {...line}><path d="M14 6v13M8.500 13.500l5.500 5.500 5.500-5.500M8.500 20.500h6" /><circle cx="20" cy="20.500" r="6" fill="#0078d7" stroke="none" /><text x="20" y="24.200" textAnchor="middle" fill="#fff" stroke="none" fontSize="10.500" fontWeight="500" fontFamily="Noto Sans">2</text></svg></div>
        </Toolbar>
        <Page>
          <Form>
            <FormTitle $h={21} $pt={3}>Вход</FormTitle>
            <Field>Nikita</Field>
            <Field><Dots><i /><i /><i /></Dots></Field>
            <Submit>Отправить</Submit>
            <FormTitle $h={20} $pt={1}>или</FormTitle>
            <Register>Регистрация</Register>
          </Form>
        </Page>
        <Panel>
          <Address>
            <Globe />
            <Url>http://192.168.0.17/index.php?login=Nikita&amp;&amp;password=123</Url>
            <svg width="11" height="11" viewBox="0 0 11 11" {...line} stroke="#bdbdbd"><path d="M.5.5l10 10M10.500.5l-10 10" /></svg>
          </Address>
          <Board>
            <Tiles>
              <Tile><TileLogo><Words w={129} h={68} /></TileLogo><TileLabel>➔ Дзен</TileLabel></Tile>
              <Tile><TileLogo><Tube w={45} h={33} /></TileLogo><TileLabel>YouTube</TileLabel></Tile>
              <Tile><TileLogo><Gmail w={41} /></TileLogo><TileLabel>Gmail</TileLabel></Tile>
              <Tile><TileLogo><Vk s={39} /></TileLogo><TileLabel>ВКонтакте</TileLabel></Tile>
              <Tile $bg="#001a3d"><TileLogo><Ship /></TileLogo><TileLabel $bold $ls="-0.3px">World of Warships</TileLabel></Tile>
              <Tile $bg="#ff7700">
                <TileLogo>
                  <OkMark><FaOdnoklassniki size={24} /></OkMark>
                  <OkWord>OK</OkWord>
                </TileLogo>
                <TileLabel $bold>Видео</TileLabel>
              </Tile>
              <Tile>
                <MiniGrid>
                  <Mini><Words w={48} h={25.5} /></Mini>
                  <Mini><Photo /></Mini>
                  <Mini><Letter s={18} r={6} /></Mini>
                  <Mini><Saucer /></Mini>
                </MiniGrid>
              </Tile>
              <Tile><Center><Ya s={49} /></Center></Tile>
              <Tile $bg="#65a943"><Freetp>Freetp</Freetp></Tile>
              <Tile $bg="#e4e4e4" />
              <Tile $bg="#e4e4e4" />
              <Tile $bg="#e4e4e4" />
            </Tiles>
            <AddSite>
              <svg width="17" height="12" viewBox="0 0 17 12" {...line}><rect x=".6" y=".6" width="15.800" height="10.400" rx="1.500" /><path d="M8.500 2.500v6.600M5.200 5.800h6.600" /></svg>
              Добавить этот сайт на Табло
            </AddSite>
          </Board>
        </Panel>
      </Main>
      <TaskBar>
        <Start><svg width="16" height="16" viewBox="0 0 16 16"><path d="M0 2.200L6.500 1.300V7.500H0zM7.300 1.200L16 0v7.500H7.300zM0 8.300h6.500v6.300L0 13.800zM7.300 8.300H16V16l-8.700-1.200z" /></svg></Start>
        <Search>
          <svg width="17" height="17" viewBox="0 0 17 17" {...line} strokeWidth="1.300"><circle cx="10.800" cy="6" r="5.300" /><path d="M7 9.800L.8 16" /></svg>
          <SearchText>Поиск</SearchText>
          <Sheep />
        </Search>
        <Apps $pad={4}>
          <TaskButton><TaskIcon><svg width="17" height="16" viewBox="0 0 17 16" {...line}><path d="M.6 0v2.500h10.800V0M.6 5h10.800v6H.6zM.6 16v-2.500h10.800V16M15 0v4M15 8v8" /><rect x="13.500" y="4.500" width="3" height="3" fill="#111" stroke="none" /></svg></TaskIcon></TaskButton>
        </Apps>
        <Apps $pad={2}>
          {apps.map(([Icon, kind, active], i) => (
            <TaskButton key={i} $active={active}><TaskIcon><Icon /></TaskIcon><Under $kind={kind} /></TaskButton>
          ))}
        </Apps>
        <Tray>
          <TrayCell $w={24}><svg width="12" height="7" viewBox="0 0 12 7" {...line}><path d="M.5 6.500L6 1l5.500 5.500" /></svg></TrayCell>
          <TrayCell $w={24}><svg width="17" height="15" viewBox="0 0 17 15" {...line}><path d="M.6 5v5H3l4 4V1L3 5zM9 5q1.600 2.500 0 5M11 3.300q3 4.200 0 8.400M13 1.500q4.500 6 0 12" /></svg></TrayCell>
          <TrayCell $w={25}><svg width="17" height="17" viewBox="0 0 17 17" {...line}><path d="M9 14.500L1 13V3.500l14.500-2.500V10M5 9q0-3.500 3-3.500 1.500 0 2.500 1.500V4.500M11 8.500Q11 11 8 11q-1.500 0-2.500-1.500V12" /><circle cx="13" cy="13" r="3.400" fill="#ff9500" stroke="none" /></svg></TrayCell>
          <TrayCell $w={24}><svg width="14" height="14" viewBox="0 0 14 14" {...line} strokeWidth="1"><path d="M.6 12Q1 2 12 1.500" stroke="#8c919a" /><path d="M3.500 12.500Q4 5 12 4.500M6.500 13Q7 8 12 7.500M9.300 13Q9.500 11 12 10.500" /><circle cx="11.500" cy="12.500" r="1.200" fill="#111" stroke="none" /></svg></TrayCell>
          <TrayCell $w={22}><svg width="11" height="17" viewBox="0 0 11 17" {...line}><rect x="2.200" y="0" width="6.600" height="12" rx="1.500" fill="#111" stroke="none" /><path d="M.6 9.500q0 4 4.900 4t4.900-4M5.500 13v3M2.500 16.300h6" /></svg></TrayCell>
          <TrayCell $w={38}>ENG</TrayCell>
          <Clock>19:34<br />24.07.2024</Clock>
          <Notice>
            <svg width="26" height="26" viewBox="0 0 26 26">
              <path d="M3 3h16v12H11v4l-4-4H3z" fill="#000" /><path d="M5 6.500h12M5 9.500h12M5 12.500h8" stroke="#fff" />
              <circle cx="18" cy="18" r="7.500" fill="#dcdcdc" stroke="#8f8f8f" />
              <text x="18" y="22" textAnchor="middle" fontSize="11" fontWeight="500" fontFamily="Noto Sans">5</text>
            </svg>
          </Notice>
          <Peek />
        </Tray>
      </TaskBar>
    </Screen>
  );
}
